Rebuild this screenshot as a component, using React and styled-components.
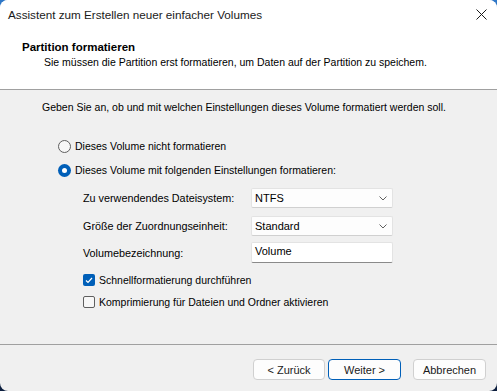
import React from "react";
import styled, { createGlobalStyle } from "styled-components";

const Global = createGlobalStyle`
  html, body { margin: 0; padding: 0; }
  html { background: linear-gradient(to bottom, #2f78c8 0%, #3a5c8c 50%, #0c1e3e 100%); }
  body { width: 497px; height: 391px; overflow: hidden; font-family: "Liberation Sans", Arial, sans-serif; color: #000; }
`;

const Window = styled.div`
  width: 497px;
  height: 391px;
  display: flex;
  flex-direction: column;
  background: #f0f0f0;
  border-radius: 8px;
  overflow: hidden;
`;

const TitleBar = styled.div`
  height: 29px;
  display: flex;
  align-items: center;
  justify-content: space-between;
  padding: 0 10px 0 8px;
  background: #fff;
  font-size: 11.7px;
  color: #1a1a1a;
`;

const CloseIcon = styled.svg`
  width: 11px;
  height: 11px;
`;

const Header = styled.div`
  background: #fff;
  height: 61px;
  padding-top: 11px;
  box-sizing: border-box;
  border-bottom: 1px solid #a0a0a0;
`;

const HeaderTitle = styled.div`
  font-weight: bold;
  font-size: 11.5px;
  line-height: 14px;
  padding-left: 22px;
`;

const HeaderSub = styled.div`
  font-size: 10.5px;
  line-height: 14px;
  padding-left: 44px;
  margin-top: 1px;
`;

const Body = styled.div`
  flex: 1;
  padding: 10px 0 0 42px;
  font-size: 10.5px;
  line-height: 14px;
`;

const Intro = styled.div``;

const RadioRow = styled.label`
  display: flex;
  align-items: center;
  gap: 4px;
  height: 14px;
  margin-left: 16px;
  margin-top: ${(p) => p.$mt}px;
`;

const RadioCircle = styled.span`
  width: 13px;
  height: 13px;
  box-sizing: border-box;
  border-radius: 50%;
  border: ${(p) => (p.$on ? "none" : "1px solid #5f5f5f")};
  background: ${(p) => (p.$on ? "#005fb8" : "#f7f7f7")};
  display: flex;
  align-items: center;
  justify-content: center;
  &::after {
    content: "";
    display: ${(p) => (p.$on ? "block" : "none")};
    width: 5px;
    height: 5px;
    border-radius: 50%;
    background: #fff;
  }
`;

const Form = styled.div`
  margin: 11px 0 0 41px;
  display: flex;
  flex-direction: column;
`;

const FormRow = styled.div`
  display: grid;
  grid-template-columns: 168px 142px;
  align-items: center;
  margin-top: ${(p) => p.$mt || 0}px;
`;

const FieldLabel = styled.div`
  font-size: 10.8px;
`;

const Select = styled.div`
  height: 20px;
  box-sizing: border-box;
  background: #fdfdfd;
  border: 1px solid #e3e3e3;
  border-bottom-color: #d0d0d0;
  border-radius: 2px;
  display: flex;
  align-items: center;
  justify-content: space-between;
  padding: 0 5px 0 3px;
  font-size: 11px;
`;

const TextInput = styled.div`
  height: 21px;
  box-sizing: border-box;
  background: #fff;
  border: 1px solid #e3e3e3;
  border-bottom: 1px solid #8a8a8a;
  border-radius: 2px;
  padding: 1px 5px 0 3px;
  font-size: 11px;
  line-height: 14px;
`;

const Chevron = styled.svg`
  width: 8px;
  height: 5px;
`;

const CheckRow = styled.label`
  display: flex;
  align-items: center;
  gap: 4px;
  height: 14px;
  margin-left: 41px;
  margin-top: ${(p) => p.$mt}px;
`;

const CheckBox = styled.span`
  width: 12px;
  height: 12px;
  box-sizing: border-box;
  border-radius: 2px;
  border: ${(p) => (p.$on ? "none" : "1px solid #5f5f5f")};
  background: ${(p) => (p.$on ? "#005fb8" : "#f7f7f7")};
  display: flex;
  align-items: center;
  justify-content: center;
`;

const Footer = styled.div`
  height: 47px;
  box-sizing: border-box;
  border-top: 1px solid #a0a0a0;
  display: flex;
  justify-content: flex-end;
  align-items: flex-start;
  padding: 14px 11px 0 0;
`;

const Button = styled.button`
  width: ${(p) => p.$w}px;
  height: 21px;
  margin-left: ${(p) => p.$ml || 0}px;
  box-sizing: border-box;
  background: #fdfdfd;
  border: 1px solid ${(p) => (p.$primary ? "#005fb8" : "#d0d0d0")};
  border-radius: 4px;
  font-family: "Liberation Sans", Arial, sans-serif;
  font-size: 11px;
  color: #1a1a1a;
  padding: 0;
`;

const chevron = (
  <Chevron viewBox="0 0 8 5">
    <path d="M0.5 0.5 L4 4 L7.5 0.5" stroke="#606060" fill="none" strokeWidth="1" />
  </Chevron>
);

export default function App() {
  return (
    <>
      <Global />
      <Window>
        <TitleBar>
          <span>Assistent zum Erstellen neuer einfacher Volumes</span>
          <CloseIcon viewBox="0 0 11 11">
            <path d="M0.5 0.5 L10.5 10.5 M10.5 0.5 L0.5 10.5" stroke="#1a1a1a" strokeWidth="1" fill="none" />
          </CloseIcon>
        </TitleBar>
        <Header>
          <HeaderTitle>Partition formatieren</HeaderTitle>
          <HeaderSub>Sie müssen die Partition erst formatieren, um Daten auf der Partition zu speichem.</HeaderSub>
        </Header>
        <Body>
          <Intro>Geben Sie an, ob und mit welchen Einstellungen dieses Volume formatiert werden soll.</Intro>
          <RadioRow $mt={25}>
            <RadioCircle />
            Dieses Volume nicht formatieren
          </RadioRow>
          <RadioRow $mt={10}>
            <RadioCircle $on />
            Dieses Volume mit folgenden Einstellungen formatieren:
          </RadioRow>
          <Form>
            <FormRow>
              <FieldLabel>Zu verwendendes Dateisystem:</FieldLabel>
              <Select>NTFS{chevron}</Select>
            </FormRow>
            <FormRow $mt={8}>
              <FieldLabel>Größe der Zuordnungseinheit:</FieldLabel>
              <Select>Standard{chevron}</Select>
            </FormRow>
            <FormRow $mt={6}>
              <FieldLabel>Volumebezeichnung:</FieldLabel>
              <TextInput>Volume</TextInput>
            </FormRow>
          </Form>
          <CheckRow $mt={10}>
            <CheckBox $on>
              <svg width="8" height="7" viewBox="0 0 8 7">
                <path d="M1 3.5 L3 5.5 L7 1" stroke="#fff" strokeWidth="1.2" fill="none" />
              </svg>
            </CheckBox>
            Schnellformatierung durchführen
          </CheckRow>
          <CheckRow $mt={8}>
            <CheckBox />
            Komprimierung für Dateien und Ordner aktivieren
          </CheckRow>
        </Body>
        <Footer>
          <Button $w={72}>&lt; Zurück</Button>
          <Button $w={73} $ml={3} $primary>Weiter &gt;</Button>
          <Button $w={73} $ml={12}>Abbrechen</Button>
        </Footer>
      </Window>
    </>
  );
}
